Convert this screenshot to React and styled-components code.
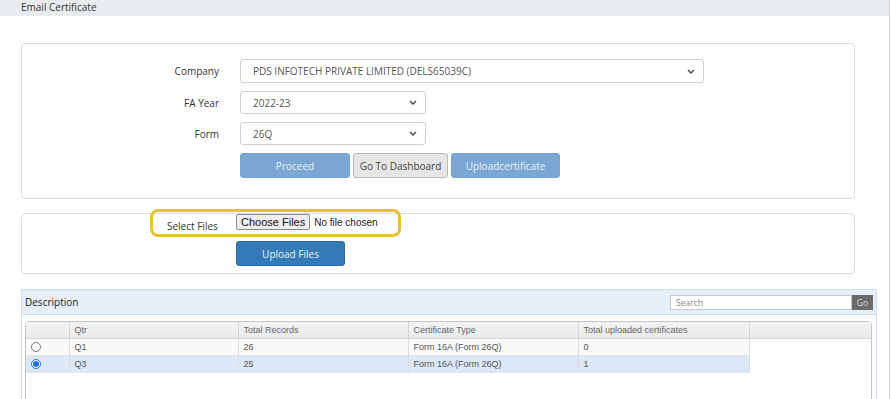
import styled, { createGlobalStyle } from "styled-components";

const GlobalStyle = createGlobalStyle`
  body {
    margin: 0;
    background: #fff;
    font-family: "Open Sans", "Noto Sans", sans-serif;
    color: #333;
  }
`

const Page = styled.div`
  width: 889px;
  min-height: 399px;
  border-right: 1px solid #d4d4d4;
  overflow: hidden;
`

const TitleBar = styled.div`
  height: 16px;
  line-height: 15px;
  padding-left: 21px;
  background: #e9ecef;
  font-size: 10px;
  color: #333;
`

const Content = styled.div`
  padding: 27px 0 0 21px;
  display: flex;
  flex-direction: column;
`

const Panel = styled.div`
  position: relative;
  width: 832px;
  border: 1px solid #dddddd;
  border-radius: 4px;
  margin-bottom: ${p => p.$gap || 0}px;
`

const FormGrid = styled.div`
  display: grid;
  grid-template-columns: 197px auto;
  column-gap: 21px;
  row-gap: 8px;
  padding: 15px 0 20px 0;
  align-items: center;
`

const Label = styled.div`
  text-align: right;
  font-size: 10px;
  color: #333;
`

const SelectBox = styled.div`
  width: ${p => p.$w}px;
  height: ${p => p.$h || 24}px;
  box-sizing: border-box;
  border: 1px solid #cfcfcf;
  border-radius: 3px;
  display: flex;
  align-items: center;
  justify-content: space-between;
  padding: 0 8px 0 12px;
  font-size: 10px;
  color: #555;
  background: #fff;
`

const Chevron = () => (
  <svg width="8" height="5" viewBox="0 0 8 5">
    <path d="M1 1 L4 4 L7 1" fill="none" stroke="#444" strokeWidth="1.4" />
  </svg>
)

const ButtonRow = styled.div`
  grid-column: 2;
  display: flex;
  gap: 3px;
`

const Btn = styled.div`
  width: ${p => p.$w}px;
  height: 25px;
  box-sizing: border-box;
  border-radius: 3px;
  display: flex;
  align-items: center;
  justify-content: center;
  font-size: 10px;
  background: ${p => p.$variant === "default" ? "#e6e6e6" : p.$variant === "primary" ? "#337ab7" : "#7ba7d4"};
  color: ${p => p.$variant === "default" ? "#444" : p.$variant === "primary" ? "#e8eff7" : "#eaf1f9"};
  border: 1px solid ${p => p.$variant === "default" ? "#b8b8b8" : p.$variant === "primary" ? "#2e6da4" : "#78a3d0"};
`

const UploadGrid = styled.div`
  display: grid;
  grid-template-columns: 69px auto;
  row-gap: 8px;
  padding: 0 0 7px 145px;
  align-items: start;
`

const FileLabel = styled.div`
  font-size: 10px;
  color: #333;
  padding-top: 5px;
`

const FileInput = styled.div`
  display: flex;
  align-items: center;
  gap: 4px;
  font-family: "Liberation Sans", Arial, sans-serif;
  font-size: 10px;
  color: #222;
`

const FileButton = styled.div`
  height: 16px;
  box-sizing: border-box;
  padding: 0 4px;
  line-height: 14px;
  background: #efefef;
  border: 1px solid #8a8a8a;
  border-radius: 2px;
  font-size: 11px;
  color: #111;
`

const Highlight = styled.div`
  position: absolute;
  left: 128px;
  top: -5px;
  width: 251px;
  height: 28px;
  box-sizing: border-box;
  border: 3px solid #e6c02f;
  border-radius: 8px;
  pointer-events: none;
`

const DescPanel = styled.div`
  width: 854px;
  height: 130px;
  border: 1px solid #d3dfee;
  background: #fff;
`

const DescHeader = styled.div`
  height: 24px;
  background: #e6eef8;
  border-bottom: 1px solid #d3dfee;
  display: flex;
  align-items: center;
  justify-content: space-between;
  padding: 0 3px 0 3px;
  font-size: 10px;
  color: #222;
`

const SearchWrap = styled.div`
  display: flex;
  align-items: center;
`

const SearchInput = styled.div`
  width: 182px;
  height: 15px;
  box-sizing: border-box;
  border: 1px solid #c8c8c8;
  background: #fff;
  font-size: 8.5px;
  color: #888;
  padding-left: 5px;
  line-height: 13px;
`

const GoBtn = styled.div`
  width: 21px;
  height: 15px;
  background: #6b6b6b;
  color: #ddd;
  font-size: 8.5px;
  display: flex;
  align-items: center;
  justify-content: center;
`

const GridWrap = styled.div`
  margin: 6px 4px 0 3px;
  height: 100px;
  border: 1px solid #c4c4c4;
  border-radius: 4px 4px 0 0;
  overflow: hidden;
`

const Table = styled.table`
  width: 100%;
  border-collapse: collapse;
  font-family: "Liberation Sans", Arial, sans-serif;
  font-size: 9px;
  table-layout: fixed;
`

const Th = styled.th`
  box-sizing: border-box;
  height: 16px;
  padding: 0 5px;
  text-align: left;
  font-weight: normal;
  color: #666;
  background: linear-gradient(#f3f3f3, #e9e9e9);
  border-right: ${p => p.$last ? "none" : "1px solid #d6d6d6"};
  border-bottom: 1px solid #d6d6d6;
  width: ${p => p.$w ? `${p.$w}px` : "auto"};
`

const Tr = styled.tr`
  background: ${p => p.$selected ? "#dce8f6" : "#fafafa"};
`

const Td = styled.td`
  height: 16px;
  padding: 0 5px;
  color: #555;
  border-right: 1px solid #dcdcdc;
  border-bottom: 1px solid #e4e4e4;
  white-space: nowrap;
`

const FillerTd = styled.td`
  background: #fff;
`

const Radio = styled.input`
  width: 10px;
  height: 10px;
  margin: 0;
  vertical-align: middle;
  accent-color: #1a73e8;
`

const rows = [
  { qtr: "Q1", total: 26, type: "Form 16A (Form 26Q)", uploaded: 0, selected: false },
  { qtr: "Q3", total: 25, type: "Form 16A (Form 26Q)", uploaded: 1, selected: true },
]

const App = () => {
  return (
    <>
      <GlobalStyle />
      <Page>
        <TitleBar>Email Certificate</TitleBar>
        <Content>
          <Panel $gap={14}>
            <FormGrid>
              <Label>Company</Label>
              <SelectBox $w={464}>PDS INFOTECH PRIVATE LIMITED (DELS65039C)<Chevron /></SelectBox>
              <Label>FA Year</Label>
              <SelectBox $w={186} $h={23}>2022-23<Chevron /></SelectBox>
              <Label>Form</Label>
              <SelectBox $w={186} $h={23}>26Q<Chevron /></SelectBox>
              <ButtonRow>
                <Btn $w={110} $variant="disabled">Proceed</Btn>
                <Btn $w={95} $variant="default">Go To Dashboard</Btn>
                <Btn $w={109} $variant="disabled">Uploadcertificate</Btn>
              </ButtonRow>
            </FormGrid>
          </Panel>

          <Panel $gap={15}>
            <UploadGrid>
              <FileLabel>Select Files</FileLabel>
              <FileInput>
                <FileButton>Choose Files</FileButton>
                <span>No file chosen</span>
              </FileInput>
              <div />
              <Btn $w={109} $variant="primary">Upload Files</Btn>
            </UploadGrid>
            <Highlight />
          </Panel>

          <DescPanel>
            <DescHeader>
              <span>Description</span>
              <SearchWrap>
                <SearchInput>Search</SearchInput>
                <GoBtn>Go</GoBtn>
              </SearchWrap>
            </DescHeader>
            <GridWrap>
              <Table>
                <thead>
                  <tr>
                    <Th $w={43}></Th>
                    <Th $w={169}>Qtr</Th>
                    <Th $w={170}>Total Records</Th>
                    <Th $w={170}>Certificate Type</Th>
                    <Th $w={171}>Total uploaded certificates</Th>
                    <Th $last></Th>
                  </tr>
                </thead>
                <tbody>
                  {rows.map(r => (
                    <Tr key={r.qtr} $selected={r.selected}>
                      <Td><Radio type="radio" name="qtr" defaultChecked={r.selected} /></Td>
                      <Td>{r.qtr}</Td>
                      <Td>{r.total}</Td>
                      <Td>{r.type}</Td>
                      <Td>{r.uploaded}</Td>
                      <FillerTd />
                    </Tr>
                  ))}
                </tbody>
              </Table>
            </GridWrap>
          </DescPanel>
        </Content>
      </Page>
    </>
  )
}

export default App
